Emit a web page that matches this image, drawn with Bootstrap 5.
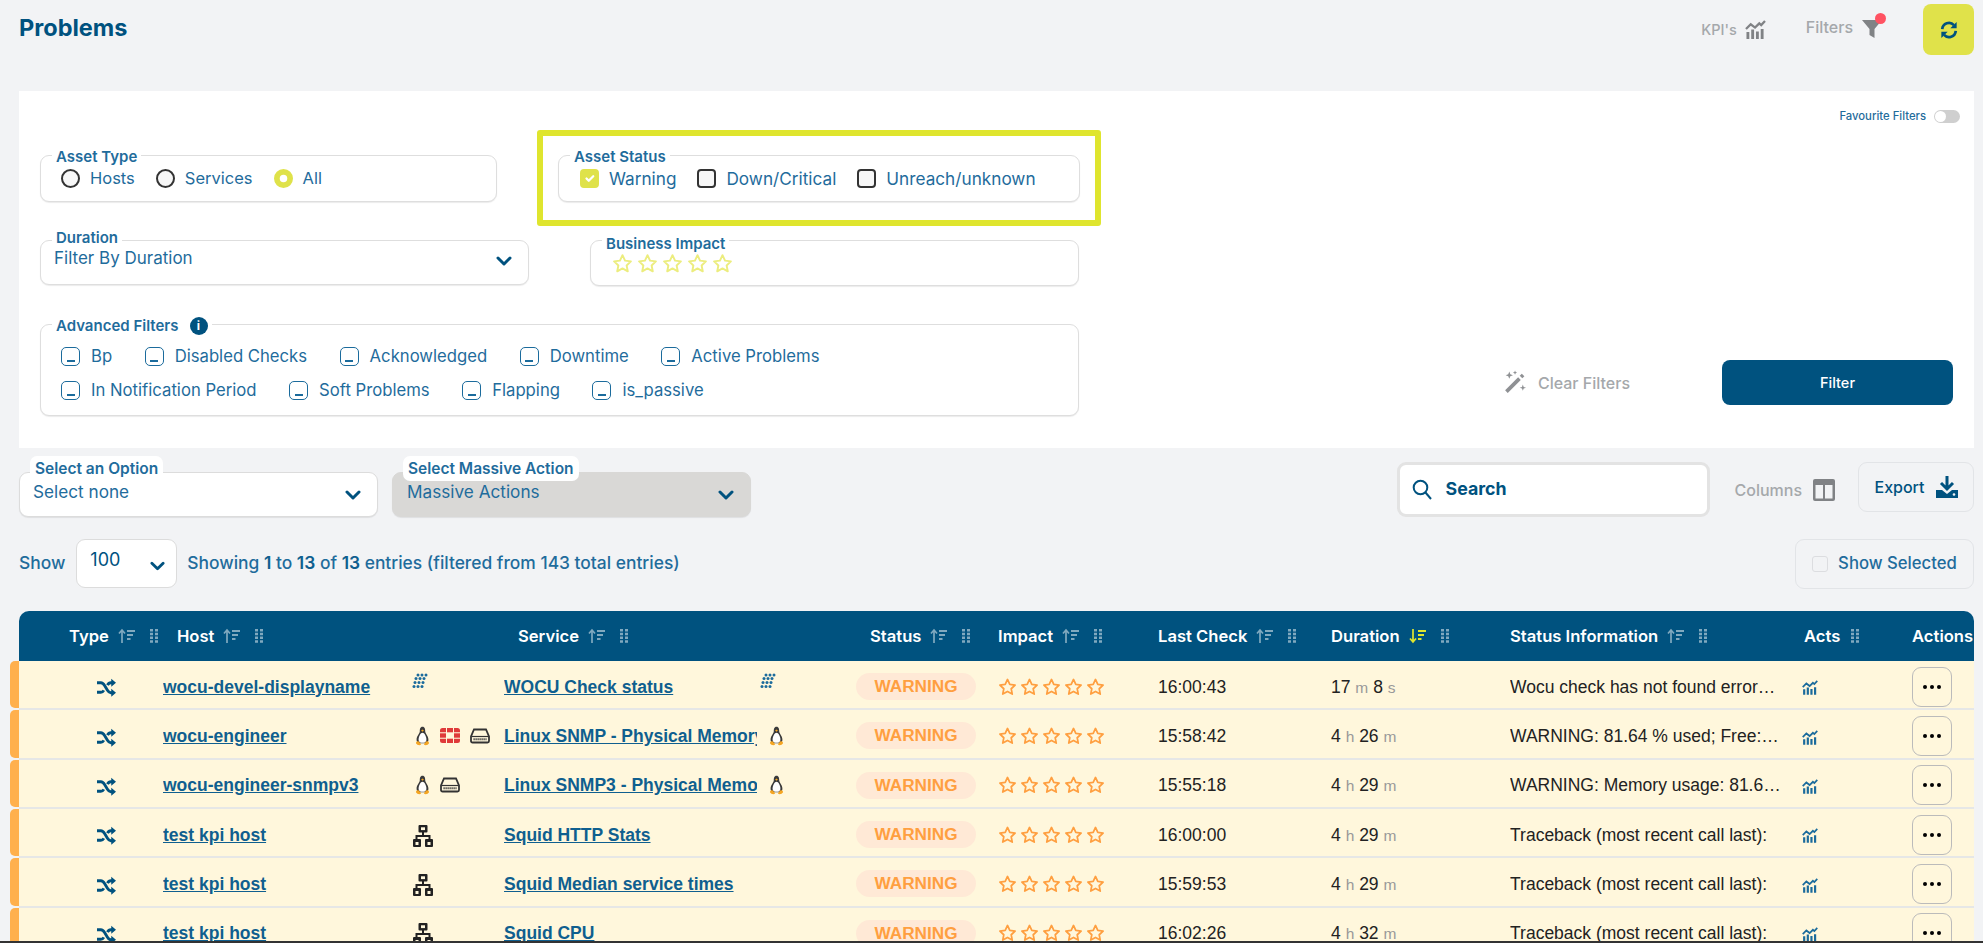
<!DOCTYPE html>
<html lang="en">
<head>
<meta charset="utf-8">
<title>Problems</title>
<link href="https://cdn.jsdelivr.net/npm/bootstrap@5.3.0/dist/css/bootstrap.min.css" rel="stylesheet">
<style>
html,body{height:943px;overflow:hidden}
body{background:#f2f3f5;font-family:Inter,"Liberation Sans",sans-serif;color:#0f5f8f;font-size:16px}
.page{height:943px;overflow:hidden;border-bottom:2px solid #333}
.topbar{height:91px;padding:0 9px 0 19px}
.title{font-size:23.500px;font-weight:700;color:#00527f;margin:16px 0 0;line-height:24px}
.muted-link{color:#a5a8ab;font-size:16px;font-weight:500}
.kpi{margin-right:40px;margin-top:19px;font-size:14.500px}
.filters{margin-top:15px}
.kpi svg{color:#808285}
.refresh{width:51px;height:51px;background:#e0e24a;border:0;border-radius:8px;margin-left:37px;margin-top:4px;padding:0}
.refresh:hover{background:#e0e24a}
.filter-ico{position:relative;width:25px;height:24px}
.dot{position:absolute;right:0;top:-2px;width:11px;height:11px;border-radius:50%;background:#ff5262}
.panel{background:#fff;margin:0 9px 0 19px;height:357px}
.left-col{width:1061px;margin-left:21px;padding-top:39px}
.fs{position:relative;border:1px solid #dedede;border-radius:9px;box-shadow:0 1px 1px rgba(0,0,0,.08);background:#fff}
.fs-label{position:absolute;left:11px;top:-8px;background:#fff;padding:0 4px;font-size:15px;font-weight:600;line-height:18px;color:#1f6c9c;white-space:nowrap}
.fs-label.up{top:-12.500px}
.fs-label.down{top:-6.500px}
.asset-type{width:457px;height:47px;padding:0 20px}
.highlight{border:6px solid #dfe52e;border-radius:3px;padding:19px 15px;margin-left:40px;width:564px;height:96px}
.asset-status{height:47px;padding:0 21px}
.choice{display:flex;align-items:center;gap:10px;margin-right:21px;font-size:17.200px;color:#1f6c9c;padding-top:1px}
.asset-type .choice{font-size:16.500px}
.form-check-input.radio-b,.form-check-input.check-b{width:19px;height:19px;margin:0;border:2px solid #333;background-color:#f7f7f7;flex:none}
.form-check-input.check-b{border-radius:4px}
.form-check-input.check-b:checked,.form-check-input.radio-b:checked{background-color:#dfe24a;border-color:#dfe24a}
.select-box{display:flex;align-items:flex-start;justify-content:space-between;height:45px;width:489px;padding:6px 16px 0 13px;font-size:17px;line-height:22px;color:#1f6c9c}
.chev{color:#00527f;margin-top:9px;flex:none}
.impact{width:489px;height:46px;margin-left:61px;padding:12px 0 0 21px;color:#eced7e}
.row2{margin-top:14px}
.adv{height:92px;margin-top:38px;width:1039px;padding:15px 0 0 20px}
.adv .line{display:flex;height:34px;align-items:center}
.min{display:inline-flex;width:19px;height:19px;border:1.500px solid #1b6b9c;border-radius:5px;margin-right:11px;align-items:flex-end;justify-content:center;padding-bottom:3px;flex:none}
.min::after{content:"";width:8px;height:2px;background:#1b6b9c}
.opt{display:flex;align-items:center;margin-right:32.500px;font-size:16.700px;color:#1f6c9c;white-space:nowrap}
.info{display:inline-flex;width:18px;height:18px;border-radius:50%;background:#00527f;color:#fff;font-size:12px;font-weight:700;align-items:center;justify-content:center;margin-left:11px;vertical-align:top}
.right-col{padding:16px 21px 43px 0}
.fav{font-size:11.300px;color:#1f6c9c;font-weight:500;margin-right:-7px;padding-top:1px}
.toggle{width:26px;height:13px;border-radius:7px;background:#cfcfcf;position:relative;margin-left:8px}
.toggle::after{content:"";position:absolute;left:1px;top:1px;width:11px;height:11px;border-radius:50%;background:#fff}
.clear{color:#a5a8ab;font-size:16px;font-weight:500;margin-right:92px;gap:11px}
.btn-filter{width:231px;height:45px;background:#00527f;border:0;color:#fff;font-size:14.500px;font-weight:500;border-radius:8px}
.btn-filter:hover{background:#00527f;color:#fff}
.tools{height:91px;padding:14px 9px 0 19px}
.selbox{position:relative;width:359px;height:45px;margin-top:10px;border:1px solid #dcdcdc;border-radius:9px;background:#fff;box-shadow:0 1px 1px rgba(0,0,0,.08);padding:8px 16px 0 13px;display:flex;justify-content:space-between;font-size:17.200px;line-height:22px;color:#1f6c9c}
.selbox.dis{background:#d9d8d6;border-color:#d9d8d6;margin-left:14px;padding-left:14px}
.selbox .tag{position:absolute;left:10px;top:-17px;background:#fff;border-radius:7px;padding:2px 5px;font-size:15.500px;font-weight:600;line-height:21px;color:#1f6c9c;white-space:nowrap}
.search{width:313px;height:55px;margin-left:auto;border:3px solid #e3e3e3;border-radius:9px;background:#fff;color:#00527f;font-weight:700;font-size:17.800px;padding-left:12px;gap:13px}
.cols{margin:0 23px 0 24px;color:#a5a8ab;font-size:16px;font-weight:500;gap:11px;height:55px}
.ghost{border:1.500px solid #e2e4e7;border-radius:9px;color:#00527f;font-size:16px;font-weight:500;background:transparent}
.export{width:116px;height:50px;gap:11px;padding:0}
.entries{height:72px;padding:0 9px 0 19px}
.ent-line{height:49px}
.show-sel{font-size:16.700px;color:#1f6c9c;width:179px;height:50px;gap:10px;padding:0}
.fake-cb{width:16px;height:16px;border:1px solid #dcdde0;border-radius:3px;flex:none;background:#f2f3f5}
.len{width:101px;height:49px;margin:0 10px 0 11px;background:#fff;border:1px solid #dcdcdc;border-radius:9px;display:flex;justify-content:space-between;padding:6px 11px 0 13px;color:#00527f;font-size:18px}
.len .chev{margin-top:15px}
.entries b{font-weight:600;color:#0f5f8f}
.entries .txt{font-size:17.400px;color:#1f6c9c;font-weight:500}
.wrap{margin:0 9px 0 19px}
.table{table-layout:fixed;width:1955px;margin:0;border-collapse:separate;border-spacing:0;--bs-table-bg:transparent}
.c1{width:144px}.c2{width:249px}.c3{width:92px}.c4{width:256px}.c5{width:96px}.c6{width:142px}.c7{width:160px}.c8{width:173px}.c9{width:179px}.c10{width:292px}.c11{width:110px}.c12{width:62px}
.table thead th{background:#00527f;color:#fff;height:50px;padding:0;border:0;font-weight:600;font-size:16.600px;vertical-align:middle;white-space:nowrap;overflow:hidden}
.table thead th:first-child{border-top-left-radius:10px}
.table thead th:last-child{border-top-right-radius:10px}
.h{display:flex;align-items:center}
.h.p14{padding-left:14px}
.h.p50{padding-left:50px}
.h.p2{padding-left:2px}
.so{margin-left:9px;opacity:.5}
.so.on{opacity:1;color:#dfe52e}
.gr{margin-left:15px;opacity:.5}
.p2 .gr{margin-left:11px}
.table tbody td{background:#fff7dc;height:49.330px;padding:4px 0 0;border:0;border-bottom:2px solid #e6e7e6;vertical-align:middle;font-family:"Liberation Sans",Arial,sans-serif;font-size:17.500px;color:#222;white-space:nowrap;overflow:hidden}
.table tbody td:first-child{position:relative;overflow:visible;padding-left:78px}
.table tbody td:first-child::before{content:"";position:absolute;left:-9px;top:0;bottom:0;width:9px;background:#ffb04d;border-radius:5px 0 0 5px}
.shuffle{color:#00527f}
.lnk{font-weight:700;color:#0f5f8f;text-decoration:underline;display:block;overflow:hidden;white-space:nowrap}
.lnk.clip{width:253px}
.icons{display:flex;gap:10px;align-items:center}
.icons.raised{margin-top:-12px}
.icons.host{padding-left:3px}
.icons.svc{padding-left:9px}
.pill{display:inline-block;width:120px;height:27px;line-height:27px;text-align:center;background:#ffe9d6;color:#ff9f40;font-weight:700;font-size:17.200px;border-radius:14px}
.stars{display:flex;gap:3px;color:#ff9f40}
.unit{color:#999;font-size:15.500px}
.msg{overflow:hidden;text-overflow:ellipsis;padding-right:22px}
.msg.wide{padding-right:18px}
.act{color:#1b6b9c}
.dots{width:40px;height:40px;border:1.500px solid #bbb;border-radius:9px;background:transparent;padding:0;display:flex;align-items:center;justify-content:center}
</style>
</head>
<body>
<svg class="d-none" xmlns="http://www.w3.org/2000/svg">
<symbol id="star" viewBox="0 0 24 24"><polygon points="12,2.5 14.9,8.7 21.6,9.6 16.7,14.2 18,20.9 12,17.6 6,20.9 7.3,14.2 2.4,9.6 9.1,8.7" fill="none" stroke="currentColor" stroke-width="2.2" stroke-linejoin="round"/></symbol>
<symbol id="shuffle" viewBox="0 0 20 20"><path d="M0 5h4c2 0 3 1.200 4 3l3 5c1 1.700 2 2.500 3.500 2.500H16M0 15h4c1.500 0 2.500-.8 3.200-2M11 7.500C11.800 6 12.800 5 14.500 5H16" fill="none" stroke="currentColor" stroke-width="3"/><path d="M15 .8 20 5l-5 4.200zM15 11.300l5 4.200-5 4.200z" fill="currentColor"/></symbol>
<symbol id="chart" viewBox="0 0 22 20"><path d="M1 9.500 6 4.500l4.500 3.500L15 3.500l2 1.800L21 1" fill="none" stroke="currentColor" stroke-width="2.400"/><path d="M1.500 12.500h3V20h-3zM6.500 10h3v10h-3zM11.500 12h3v8h-3zM16.500 9.500h3V20h-3z" fill="currentColor"/></symbol>
<symbol id="sort" viewBox="0 0 17 16"><path d="M4 15V3M1 5.500 4 2l3 3.500" fill="none" stroke="currentColor" stroke-width="1.700"/><path d="M9 2h8v2H9zM9 6h6v2H9zM9 10h3.500v2H9z" fill="currentColor"/></symbol>
<symbol id="sortd" viewBox="0 0 17 16"><path d="M4 1v12M1 10.500 4 14l3-3.500" fill="none" stroke="currentColor" stroke-width="1.700"/><path d="M9 2h8v2H9zM9 6h6v2H9zM9 10h3.500v2H9z" fill="currentColor"/></symbol>
<symbol id="grip" viewBox="0 0 8 14"><path d="M0 0h3v2.500H0zM5 0h3v2.500H5zM0 3.700h3v2.500H0zM5 3.700h3v2.500H5zM0 7.500h3V10H0zM5 7.500h3V10H5zM0 11.300h3v2.500H0zM5 11.300h3v2.500H5z" fill="currentColor"/></symbol>
<symbol id="chev" viewBox="0 0 16 10"><path d="M2 2l6 6 6-6" fill="none" stroke="currentColor" stroke-width="3" stroke-linecap="round" stroke-linejoin="round"/></symbol>
<symbol id="penguin" viewBox="0 0 16 22"><path d="M8 .8C5.300.8 5 3.500 5 6 5 8 1.500 11 1.500 15c0 2 1 3.500 2 4h9c1-.5 2-2 2-4 0-4-3.500-7-3.500-9C11 3.500 10.700.8 8 .8z" fill="#3a3a3a"/><path d="M8 7.500c-2 0-4.300 4-4.300 7.500 0 2 1.300 3.500 4.300 3.500s4.300-1.500 4.300-3.500C12.300 11.500 10 7.500 8 7.500z" fill="#fff"/><path d="M6.500 5 8 3.800 9.500 5 8 6.300z" fill="#f5a623"/><path d="M.8 19c0-1.800 2-2.500 3.200-2l2.500 3.200c-1.200 1.700-4.500 1-5.700-1.200zM15.200 19c0-1.800-2-2.500-3.200-2l-2.500 3.200c1.200 1.700 4.500 1 5.700-1.200z" fill="#f5a623"/></symbol>
<symbol id="forti" viewBox="0 0 20 15"><g fill="#df3a3a"><path d="M2.500 0H6v4.300H0V2.500A2.500 2.500 0 0 1 2.500 0zM14 0h3.500A2.500 2.500 0 0 1 20 2.500v1.800h-6zM0 10.700h6V15H2.500A2.500 2.500 0 0 1 0 12.500zM14 10.700h6v1.800a2.500 2.500 0 0 1-2.500 2.500H14z"/><rect x="7" width="6" height="4.300"/><rect x="7" y="10.700" width="6" height="4.300"/><rect y="5.300" width="6" height="4.400"/><rect x="14" y="5.300" width="6" height="4.400"/></g></symbol>
<symbol id="disk" viewBox="0 0 20 16"><path d="M4 1.500h12l3 7V13a1.500 1.500 0 0 1-1.500 1.500h-15A1.500 1.500 0 0 1 1 13V8.500z" fill="none" stroke="#333" stroke-width="1.800"/><path d="M1.500 8.500h17" stroke="#333" stroke-width="1.200"/><path d="M3.500 11.300h13" stroke="#333" stroke-width="2" stroke-dasharray="1.200 .8"/></symbol>
<symbol id="net" viewBox="0 0 22 24"><rect x="6.500" y="1" width="9" height="7.500" rx="1" fill="#222"/><rect x="9" y="3.300" width="4" height="2.800" fill="#fff7dc"/><path d="M11 8v4M4.500 15v-3h13v3" fill="none" stroke="#222" stroke-width="2"/><rect x="1" y="15" width="8" height="8" rx="1" fill="#222"/><rect x="13" y="15" width="8" height="8" rx="1" fill="#222"/><rect x="3.500" y="18" width="3" height="3" fill="#fff7dc"/><rect x="15.500" y="18" width="3" height="3" fill="#fff7dc"/></symbol>
<symbol id="wocu" viewBox="0 0 16 16"><g fill="#1b6b9c"><circle cx="6" cy="2" r="1.500"/><circle cx="10" cy="2" r="1.500"/><circle cx="14" cy="2" r="1.500"/><circle cx="4" cy="5.500" r="1.500"/><circle cx="8" cy="5.500" r="1.500"/><circle cx="12" cy="5.500" r="1.500"/><circle cx="3" cy="9.500" r="1.500"/><circle cx="7" cy="9.500" r="1.500"/><circle cx="11" cy="9.500" r="1.500"/><circle cx="2" cy="13.500" r="1.500"/><circle cx="6" cy="13.500" r="1.500"/><circle cx="10" cy="13.500" r="1.500"/></g></symbol>
<symbol id="ell" viewBox="0 0 18 4"><circle cx="2" cy="2" r="2"/><circle cx="9" cy="2" r="2"/><circle cx="16" cy="2" r="2"/></symbol>
<symbol id="five" viewBox="0 0 107 20"><use href="#star" width="19" height="20"/><use href="#star" x="22" width="19" height="20"/><use href="#star" x="44" width="19" height="20"/><use href="#star" x="66" width="19" height="20"/><use href="#star" x="88" width="19" height="20"/></symbol>
</svg>

<div class="page">
  <header class="topbar d-flex justify-content-between align-items-start">
    <h1 class="title">Problems</h1>
    <div class="d-flex align-items-start">
      <div class="d-flex align-items-center muted-link kpi">
        <span>KPI's</span>
        <svg class="ms-2" width="21" height="19"><use href="#chart"/></svg>
      </div>
      <div class="d-flex align-items-center muted-link filters">
        <span>Filters</span>
        <span class="filter-ico ms-2 d-inline-block">
          <svg width="24" height="24" viewBox="0 0 24 24"><path d="M1 3h20l-7.500 9v9l-5-3v-6z" fill="#808285"/></svg>
          <span class="dot"></span>
        </span>
      </div>
      <button class="btn refresh d-flex align-items-center justify-content-center" aria-label="Refresh">
        <svg width="18" height="18" viewBox="0 0 20 20"><path d="M2.500 9a7.500 7.500 0 0 1 13-4.500M17.500 11a7.500 7.500 0 0 1-13 4.500" fill="none" stroke="#00527f" stroke-width="3"/><path d="M18.500 1v7h-7zM1.500 19v-7h7z" fill="#00527f"/></svg>
      </button>
    </div>
  </header>

  <section class="panel d-flex">
    <div class="left-col flex-none">
      <div class="d-flex align-items-center">
        <div class="fs asset-type d-flex align-items-center">
          <span class="fs-label">Asset Type</span>
          <label class="choice"><input class="form-check-input radio-b" type="radio" name="a"> Hosts</label>
          <label class="choice"><input class="form-check-input radio-b" type="radio" name="a"> Services</label>
          <label class="choice"><input class="form-check-input radio-b" type="radio" name="a" checked> All</label>
        </div>
        <div class="highlight">
          <div class="fs asset-status d-flex align-items-center">
            <span class="fs-label">Asset Status</span>
            <label class="choice"><input class="form-check-input check-b" type="checkbox" checked> Warning</label>
            <label class="choice"><input class="form-check-input check-b" type="checkbox"> Down/Critical</label>
            <label class="choice"><input class="form-check-input check-b" type="checkbox"> Unreach/unknown</label>
          </div>
        </div>
      </div>
      <div class="d-flex row2">
        <div class="fs select-box">
          <span class="fs-label up">Duration</span>
          <span>Filter By Duration</span>
          <svg class="chev" width="16" height="10"><use href="#chev"/></svg>
        </div>
        <div class="fs impact">
          <span class="fs-label down">Business Impact</span>
          <div class="d-flex gap-1">
            <svg width="21" height="21"><use href="#star"/></svg><svg width="21" height="21"><use href="#star"/></svg><svg width="21" height="21"><use href="#star"/></svg><svg width="21" height="21"><use href="#star"/></svg><svg width="21" height="21"><use href="#star"/></svg>
          </div>
        </div>
      </div>
      <div class="fs adv">
        <span class="fs-label">Advanced Filters<span class="info">i</span></span>
        <div class="line">
          <span class="opt"><span class="min"></span>Bp</span>
          <span class="opt"><span class="min"></span>Disabled Checks</span>
          <span class="opt"><span class="min"></span>Acknowledged</span>
          <span class="opt"><span class="min"></span>Downtime</span>
          <span class="opt"><span class="min"></span>Active Problems</span>
        </div>
        <div class="line">
          <span class="opt"><span class="min"></span>In Notification Period</span>
          <span class="opt"><span class="min"></span>Soft Problems</span>
          <span class="opt"><span class="min"></span>Flapping</span>
          <span class="opt"><span class="min"></span>is_passive</span>
        </div>
      </div>
    </div>
    <div class="right-col flex-grow-1 d-flex flex-column justify-content-between">
      <div class="d-flex justify-content-end align-items-center fav">Favourite Filters<span class="toggle"></span></div>
      <div class="d-flex justify-content-end align-items-center">
        <span class="clear d-flex align-items-center">
          <svg width="25" height="25" viewBox="0 0 24 24"><path d="M3 19.500 15.500 7l2.500 2.500L5.500 22z" fill="#8f9194"/><path d="M17 5.500 19 3.500l2.500 2.500-2 2z" fill="#8f9194"/><path d="M7 1.500l1 2.500 2.500 1-2.500 1-1 2.500-1-2.500L3.500 5 6 4zM20 14l.8 2.200L23 17l-2.200.8L20 20l-.8-2.200L17 17l2.200-.8zM12.500.5l.6 1.400 1.400.6-1.400.6-.6 1.400-.6-1.400-1.400-.6 1.400-.6z" fill="#8f9194"/></svg>
          Clear Filters
        </span>
        <button class="btn btn-filter">Filter</button>
      </div>
    </div>
  </section>

  <section class="tools d-flex align-items-start">
    <div class="selbox">
      <span class="tag">Select an Option</span>
      <span>Select none</span>
      <svg class="chev" width="16" height="10"><use href="#chev"/></svg>
    </div>
    <div class="selbox dis">
      <span class="tag">Select Massive Action</span>
      <span>Massive Actions</span>
      <svg class="chev" width="16" height="10"><use href="#chev"/></svg>
    </div>
    <div class="search d-flex align-items-center">
      <svg width="20" height="21" viewBox="0 0 20 21"><circle cx="8.500" cy="8.500" r="6.800" fill="none" stroke="#00527f" stroke-width="2"/><path d="M13.500 13.500 19 20" stroke="#00527f" stroke-width="2"/></svg>
      Search
    </div>
    <div class="cols d-flex align-items-center">
      Columns
      <svg width="22" height="22" viewBox="0 0 22 22"><rect width="22" height="22" rx="2" fill="#808285"/><rect x="2.500" y="6" width="7.500" height="13.500" fill="#f2f3f5"/><rect x="12" y="6" width="7.500" height="13.500" fill="#f2f3f5"/></svg>
    </div>
    <button class="btn ghost export d-flex align-items-center justify-content-center">
      Export
      <svg width="22" height="22" viewBox="0 0 22 22"><path d="M11 0v12M5 7l6 6 6-6" fill="none" stroke="#00527f" stroke-width="3"/><path d="M0 14h6l5 4 5-4h6v8H0z" fill="#00527f"/><circle cx="18" cy="18.500" r="1.300" fill="#f2f3f5"/></svg>
    </button>
  </section>

  <section class="entries d-flex align-items-start">
    <div class="d-flex align-items-center ent-line">
      <span class="txt">Show</span>
      <div class="len"><span>100</span><svg class="chev" width="15" height="10"><use href="#chev"/></svg></div>
      <span class="txt">Showing <b>1</b> to <b>13</b> of <b>13</b> entries (filtered from 143 total entries)</span>
    </div>
    <button class="btn ghost show-sel d-flex align-items-center justify-content-center ms-auto"><span class="fake-cb"></span>Show Selected</button>
  </section>

  <div class="wrap">
    <table class="table">
      <colgroup><col class="c1"><col class="c2"><col class="c3"><col class="c4"><col class="c5"><col class="c6"><col class="c7"><col class="c8"><col class="c9"><col class="c10"><col class="c11"><col class="c12"></colgroup>
      <thead>
        <tr>
          <th><div class="h p50">Type<svg class="so" width="17" height="16"><use href="#sort"/></svg><svg class="gr" width="8" height="14"><use href="#grip"/></svg></div></th>
          <th colspan="2"><div class="h p14">Host<svg class="so" width="17" height="16"><use href="#sort"/></svg><svg class="gr" width="8" height="14"><use href="#grip"/></svg></div></th>
          <th colspan="2"><div class="h p14">Service<svg class="so" width="17" height="16"><use href="#sort"/></svg><svg class="gr" width="8" height="14"><use href="#grip"/></svg></div></th>
          <th><div class="h p14">Status<svg class="so" width="17" height="16"><use href="#sort"/></svg><svg class="gr" width="8" height="14"><use href="#grip"/></svg></div></th>
          <th><div class="h">Impact<svg class="so" width="17" height="16"><use href="#sort"/></svg><svg class="gr" width="8" height="14"><use href="#grip"/></svg></div></th>
          <th><div class="h">Last Check<svg class="so" width="17" height="16"><use href="#sort"/></svg><svg class="gr" width="8" height="14"><use href="#grip"/></svg></div></th>
          <th><div class="h">Duration<svg class="so on" width="17" height="16"><use href="#sortd"/></svg><svg class="gr" width="8" height="14"><use href="#grip"/></svg></div></th>
          <th><div class="h">Status Information<svg class="so" width="17" height="16"><use href="#sort"/></svg><svg class="gr" width="8" height="14"><use href="#grip"/></svg></div></th>
          <th><div class="h p2">Acts<svg class="gr" width="8" height="14"><use href="#grip"/></svg></div></th>
          <th>Actions</th>
        </tr>
      </thead>
      <tbody>
        <tr>
          <td><svg class="shuffle" width="19" height="19"><use href="#shuffle"/></svg></td>
          <td><a class="lnk" href="#">wocu-devel-displayname</a></td>
          <td><div class="icons raised"><svg width="16" height="16"><use href="#wocu"/></svg></div></td>
          <td><a class="lnk" href="#">WOCU Check status</a></td>
          <td><div class="icons raised"><svg width="16" height="16"><use href="#wocu"/></svg></div></td>
          <td><span class="pill">WARNING</span></td>
          <td><div class="stars"><svg width="107" height="20"><use href="#five"/></svg></div></td>
          <td>16:00:43</td>
          <td>17 <span class="unit">m</span> 8 <span class="unit">s</span></td>
          <td><div class="msg">Wocu check has not found errors in the last check</div></td>
          <td><svg class="act" width="16" height="15"><use href="#chart"/></svg></td>
          <td><button class="dots" aria-label="Actions"><svg width="18" height="4"><use href="#ell"/></svg></button></td>
        </tr>
        <tr>
          <td><svg class="shuffle" width="19" height="19"><use href="#shuffle"/></svg></td>
          <td><a class="lnk" href="#">wocu-engineer</a></td>
          <td><div class="icons host"><svg width="15" height="20"><use href="#penguin"/></svg><svg width="20" height="15"><use href="#forti"/></svg><svg width="20" height="16"><use href="#disk"/></svg></div></td>
          <td><a class="lnk clip" href="#">Linux SNMP - Physical Memory</a></td>
          <td><div class="icons svc"><svg width="15" height="20"><use href="#penguin"/></svg></div></td>
          <td><span class="pill">WARNING</span></td>
          <td><div class="stars"><svg width="107" height="20"><use href="#five"/></svg></div></td>
          <td>15:58:42</td>
          <td>4 <span class="unit">h</span> 26 <span class="unit">m</span></td>
          <td><div class="msg">WARNING: 81.64 % used; Free: 1.2 GB of 6.6 GB</div></td>
          <td><svg class="act" width="16" height="15"><use href="#chart"/></svg></td>
          <td><button class="dots" aria-label="Actions"><svg width="18" height="4"><use href="#ell"/></svg></button></td>
        </tr>
        <tr>
          <td><svg class="shuffle" width="19" height="19"><use href="#shuffle"/></svg></td>
          <td><a class="lnk" href="#">wocu-engineer-snmpv3</a></td>
          <td><div class="icons host"><svg width="15" height="20"><use href="#penguin"/></svg><svg width="20" height="16"><use href="#disk"/></svg></div></td>
          <td><a class="lnk clip" href="#">Linux SNMP3 - Physical Memory</a></td>
          <td><div class="icons svc"><svg width="15" height="20"><use href="#penguin"/></svg></div></td>
          <td><span class="pill">WARNING</span></td>
          <td><div class="stars"><svg width="107" height="20"><use href="#five"/></svg></div></td>
          <td>15:55:18</td>
          <td>4 <span class="unit">h</span> 29 <span class="unit">m</span></td>
          <td><div class="msg wide">WARNING: Memory usage: 81.64 % of total</div></td>
          <td><svg class="act" width="16" height="15"><use href="#chart"/></svg></td>
          <td><button class="dots" aria-label="Actions"><svg width="18" height="4"><use href="#ell"/></svg></button></td>
        </tr>
        <tr>
          <td><svg class="shuffle" width="19" height="19"><use href="#shuffle"/></svg></td>
          <td><a class="lnk" href="#">test kpi host</a></td>
          <td><svg width="22" height="24"><use href="#net"/></svg></td>
          <td><a class="lnk" href="#">Squid HTTP Stats</a></td>
          <td></td>
          <td><span class="pill">WARNING</span></td>
          <td><div class="stars"><svg width="107" height="20"><use href="#five"/></svg></div></td>
          <td>16:00:00</td>
          <td>4 <span class="unit">h</span> 29 <span class="unit">m</span></td>
          <td><div class="msg">Traceback (most recent call last):</div></td>
          <td><svg class="act" width="16" height="15"><use href="#chart"/></svg></td>
          <td><button class="dots" aria-label="Actions"><svg width="18" height="4"><use href="#ell"/></svg></button></td>
        </tr>
        <tr>
          <td><svg class="shuffle" width="19" height="19"><use href="#shuffle"/></svg></td>
          <td><a class="lnk" href="#">test kpi host</a></td>
          <td><svg width="22" height="24"><use href="#net"/></svg></td>
          <td><a class="lnk" href="#">Squid Median service times</a></td>
          <td></td>
          <td><span class="pill">WARNING</span></td>
          <td><div class="stars"><svg width="107" height="20"><use href="#five"/></svg></div></td>
          <td>15:59:53</td>
          <td>4 <span class="unit">h</span> 29 <span class="unit">m</span></td>
          <td><div class="msg">Traceback (most recent call last):</div></td>
          <td><svg class="act" width="16" height="15"><use href="#chart"/></svg></td>
          <td><button class="dots" aria-label="Actions"><svg width="18" height="4"><use href="#ell"/></svg></button></td>
        </tr>
        <tr>
          <td><svg class="shuffle" width="19" height="19"><use href="#shuffle"/></svg></td>
          <td><a class="lnk" href="#">test kpi host</a></td>
          <td><svg width="22" height="24"><use href="#net"/></svg></td>
          <td><a class="lnk" href="#">Squid CPU</a></td>
          <td></td>
          <td><span class="pill">WARNING</span></td>
          <td><div class="stars"><svg width="107" height="20"><use href="#five"/></svg></div></td>
          <td>16:02:26</td>
          <td>4 <span class="unit">h</span> 32 <span class="unit">m</span></td>
          <td><div class="msg">Traceback (most recent call last):</div></td>
          <td><svg class="act" width="16" height="15"><use href="#chart"/></svg></td>
          <td><button class="dots" aria-label="Actions"><svg width="18" height="4"><use href="#ell"/></svg></button></td>
        </tr>
      </tbody>
    </table>
  </div>
</div>
<script src="https://cdn.jsdelivr.net/npm/bootstrap@5.3.0/dist/js/bootstrap.bundle.min.js"></script>
</body>
</html>
